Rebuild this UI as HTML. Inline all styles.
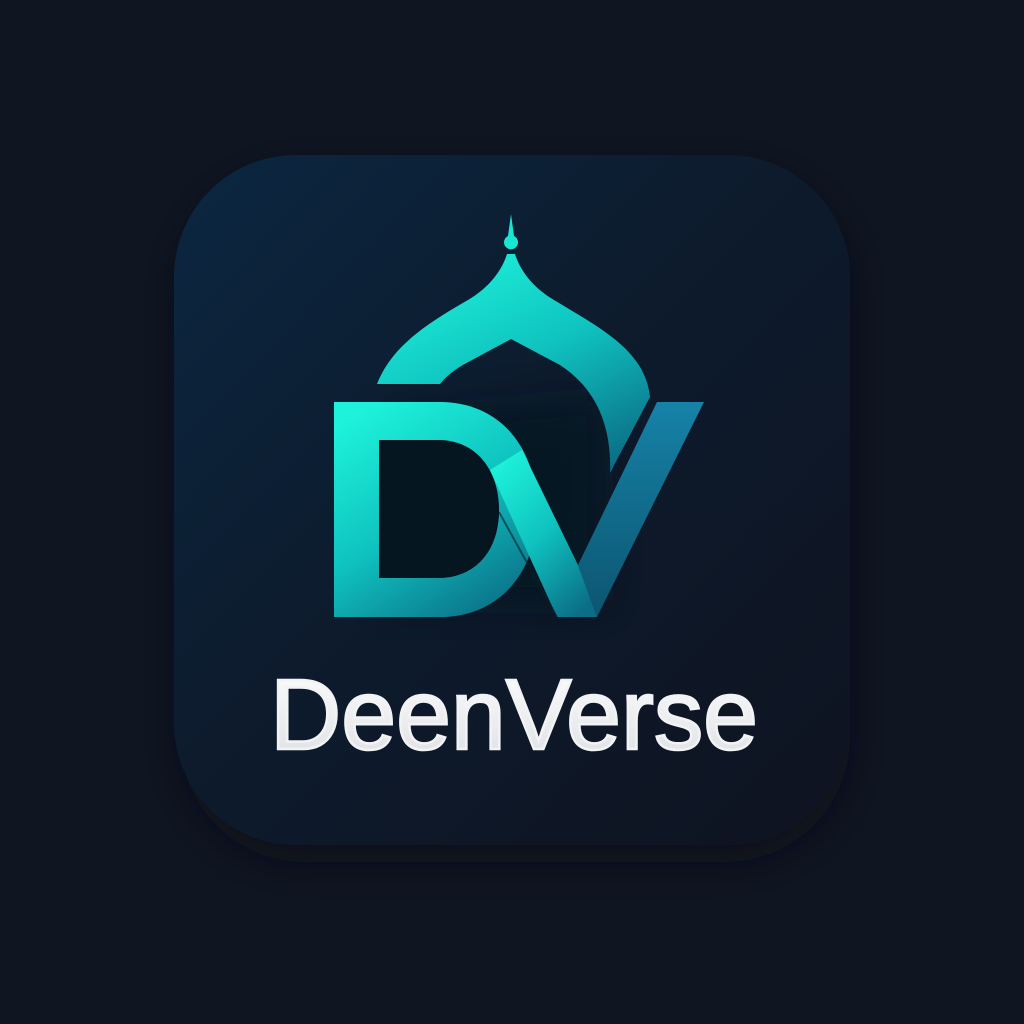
<!DOCTYPE html>
<html><head><meta charset="utf-8"><style>
html,body{margin:0;padding:0;background:#0f1521;width:1024px;height:1024px;overflow:hidden}
</style></head><body>
<svg width="1024" height="1024" viewBox="0 0 1024 1024" xmlns="http://www.w3.org/2000/svg">
<defs>
<linearGradient id="card" x1="0" y1="0" x2="1" y2="1">
<stop offset="0" stop-color="#0b2741"/><stop offset="0.45" stop-color="#0d1b2d"/><stop offset="1" stop-color="#0e1320"/>
</linearGradient>
<linearGradient id="gv" x1="0" y1="0" x2="0" y2="1">
<stop offset="0" stop-color="#1682a8"/><stop offset="1" stop-color="#0c5570"/>
</linearGradient>
<linearGradient id="gd" x1="0.2" y1="0" x2="0.8" y2="1">
<stop offset="0" stop-color="#1ef2da"/><stop offset="0.5" stop-color="#0fc2bf"/><stop offset="1" stop-color="#0b6e86"/>
</linearGradient>
<linearGradient id="txt" x1="0" y1="0" x2="0" y2="1">
<stop offset="0" stop-color="#ffffff"/><stop offset="1" stop-color="#dcdee2"/>
</linearGradient>
<filter id="sh" x="-20%" y="-20%" width="140%" height="140%"><feGaussianBlur stdDeviation="16"/></filter>
<filter id="bl" x="-20%" y="-20%" width="140%" height="140%"><feGaussianBlur stdDeviation="20"/></filter>
</defs>
<rect width="1024" height="1024" fill="#0f1521"/>
<rect x="180" y="172" width="670" height="690" rx="125" fill="#070a12" opacity="0.6" filter="url(#sh)"/>
<rect x="174" y="155" width="676" height="690" rx="122" fill="url(#card)"/>
<!-- dark interior glow -->
<path d="M390,420 L600,400 L600,600 L390,600 Z" fill="#03121c" opacity="0.6" filter="url(#bl)"/>
<!-- dome -->
<path d="M511,214 L514,236 A7,7 0 1 1 508,236 Z" fill="#17e6d3"/>
<path d="M377,384 C392,345 430,322 468,300 C490,287 502,270 507,254 L515,254 C520,270 532,287 554,300 C600,328 645,350 650,397 L610,473 C612,420 592,386 560,365 L511,339 L472,360 C458,367 447,375 440,384 Z" fill="url(#gd)"/>
<!-- D -->
<path fill-rule="evenodd" fill="url(#gd)" d="M334,402 H440 C500,402 537,448 537,510 C537,575 497,617 440,617 H334 Z M379,440 H438 C476,440 499,470 499,510 C499,550 476,578 438,578 H379 Z"/>
<path d="M379,440 H438 C476,440 499,470 499,510 C499,550 476,578 438,578 H379 Z" fill="#061621"/>
<!-- V -->
<path d="M578,565 L657,402 L704,402 L597,617 Z" fill="url(#gv)"/>
<path d="M490,470 L522,450 L578,565 L597,617 L557,617 Z" fill="url(#gd)"/>
<path d="M499,512 L557,617" stroke="#06202c" stroke-width="2" opacity="0.6"/>
<text x="270" y="749" textLength="488" lengthAdjust="spacingAndGlyphs" font-family="Liberation Sans, sans-serif" font-size="100" font-weight="normal" fill="url(#txt)" stroke="#f2f3f5" stroke-width="2.5">DeenVerse</text>
</svg>
</body></html>
